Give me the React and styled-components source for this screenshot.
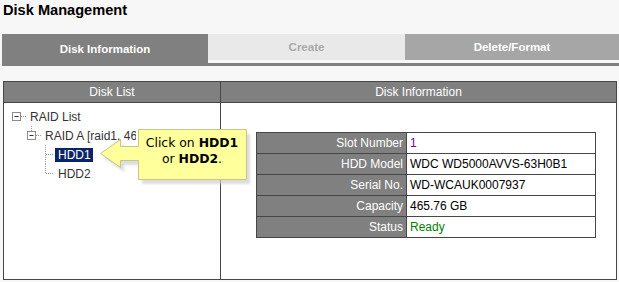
import React from 'react'
import styled, { createGlobalStyle } from 'styled-components'

const Global = createGlobalStyle`
  html, body {
    margin: 0;
    padding: 0;
    background: #f7f7f7;
  }
  body {
    width: 619px;
    height: 282px;
    overflow: hidden;
    font-family: "Liberation Sans", Arial, sans-serif;
  }
`

const Page = styled.div`
  padding: 2px 0 0 0;
`

const Title = styled.h1`
  margin: 0 0 0 3px;
  height: 32px;
  font-size: 14.6px;
  font-weight: bold;
  line-height: 17px;
  color: #000;
`

const Tabs = styled.div`
  display: flex;
  margin-left: 2px;
  height: 29px;
  border-bottom: 3px solid #808080;
  box-sizing: content-box;
`

const Tab = styled.div`
  width: ${(p) => p.w}px;
  flex: ${(p) => (p.w ? 'none' : '1')};
  height: 26px;
  display: flex;
  align-items: center;
  justify-content: center;
  font-size: 11.5px;
  font-weight: bold;
  color: ${(p) => p.fg};
  background: ${(p) => p.bg};
  ${(p) => p.active && 'height: 29px; margin-bottom: -3px; padding-bottom: 3px;'}
`

const Panel = styled.div`
  position: relative;
  margin: 15px 0 0 3px;
  width: 612px;
  height: 197px;
  border: 1px solid #474747;
  background: #fff;
  display: grid;
  grid-template-columns: 216px 1fr;
  grid-template-rows: 21px 1fr;
`

const HeadCell = styled.div`
  background: #808080;
  color: #fff;
  font-size: 12px;
  display: flex;
  align-items: center;
  justify-content: center;
  border-bottom: 1px solid #474747;
  ${(p) => p.divider && 'border-left: 1px solid #474747;'}
`

const TreeBody = styled.div`
  padding-top: 4px;
`

const InfoBody = styled.div`
  border-left: 1px solid #474747;
  padding: 29px 0 0 35px;
`

const TreeRow = styled.div`
  display: flex;
  align-items: center;
  height: 19px;
  font-size: 12px;
  color: #333;
  white-space: nowrap;
  svg {
    flex: none;
  }
`

const Clipped = styled.span`
  display: block;
  width: 91px;
  overflow: hidden;
`

const Selected = styled.span`
  background: #0a246a;
  color: #fff;
  padding: 0 2px 0 3px;
  line-height: 14px;
`

const InfoTable = styled.table`
  border-collapse: collapse;
  width: 340px;
  font-size: 12px;
  td {
    border: 1px solid #474747;
    height: 20px;
    padding: 0 3px;
  }
`

const Label = styled.td`
  background: #808080;
  color: #fff;
  text-align: right;
  width: 143px;
`

const Value = styled.td`
  color: ${(p) => p.color || '#000'};
  background: #fff;
`

const Callout = styled.div`
  position: absolute;
  left: 92px;
  top: 42px;
  width: 162px;
  height: 66px;
`

const CalloutText = styled.div`
  position: absolute;
  left: 42px;
  top: 11px;
  width: 108px;
  text-align: center;
  font-family: "DejaVu Sans", Verdana, sans-serif;
  font-size: 12.4px;
  line-height: 16px;
  color: #000;
  b {
    font-weight: bold;
  }
`

const dot = { stroke: '#999', strokeWidth: 1, strokeDasharray: '1 1' }

const Toggle = ({ x }) => (
  <>
    <rect x={x + 0.5} y={5.5} width={8} height={8} fill="#fff" stroke="#8c8c8c" />
    <line x1={x + 2.5} x2={x + 6.5} y1={9.5} y2={9.5} stroke="#333" />
  </>
)

const rows = [
  ['Slot Number', '1', '#800080'],
  ['HDD Model', 'WDC WD5000AVVS-63H0B1'],
  ['Serial No.', 'WD-WCAUK0007937'],
  ['Capacity', '465.76 GB'],
  ['Status', 'Ready', '#008000'],
]

export default function App() {
  return (
    <Page>
      <Global />
      <Title>Disk Management</Title>
      <Tabs>
        <Tab w={206} bg="#808080" fg="#fff" active>
          Disk Information
        </Tab>
        <Tab w={197} bg="#e9e9e9" fg="#a9a9a9">
          Create
        </Tab>
        <Tab bg="#a6a6a6" fg="#fff">
          Delete/Format
        </Tab>
      </Tabs>

      <Panel>
        <HeadCell>Disk List</HeadCell>
        <HeadCell divider>Disk Information</HeadCell>

        <TreeBody>
          <TreeRow>
            <svg width="26" height="19">
              <Toggle x={8} />
              <line x1={17} x2={22} y1={9.5} y2={9.5} style={dot} />
            </svg>
            RAID List
          </TreeRow>
          <TreeRow>
            <svg width="41" height="19">
              <line x1={27.5} x2={27.5} y1={0} y2={5} style={dot} />
              <Toggle x={23} />
              <line x1={32} x2={37} y1={9.5} y2={9.5} style={dot} />
            </svg>
            <Clipped>RAID A [raid1, 465.76 GB]</Clipped>
          </TreeRow>
          <TreeRow>
            <svg width="51" height="19">
              <line x1={41.5} x2={41.5} y1={0} y2={19} style={dot} />
              <line x1={42} x2={50} y1={9.5} y2={9.5} style={dot} />
            </svg>
            <Selected>HDD1</Selected>
          </TreeRow>
          <TreeRow>
            <svg width="54" height="19">
              <line x1={41.5} x2={41.5} y1={0} y2={9.5} style={dot} />
              <line x1={42} x2={50} y1={9.5} y2={9.5} style={dot} />
            </svg>
            HDD2
          </TreeRow>
        </TreeBody>

        <InfoBody>
          <InfoTable>
            <tbody>
              {rows.map(([k, v, c]) => (
                <tr key={k}>
                  <Label>{k}</Label>
                  <Value color={c}>{v}</Value>
                </tr>
              ))}
            </tbody>
          </InfoTable>
        </InfoBody>

        <Callout>
          <svg width="162" height="66">
            <defs>
              <filter id="sh" x="-10%" y="-10%" width="130%" height="130%">
                <feGaussianBlur stdDeviation="1.2" />
              </filter>
            </defs>
            <path
              d="M46 10 H154 V60 H46 V41 H28 V48 L8 34 L28 20 V27 H46 Z"
              fill="#cfcfcf"
              opacity="0.7"
              filter="url(#sh)"
            />
            <path
              d="M42.5 5.5 H150.5 V55.5 H42.5 V36.5 H24.5 V43.5 L4.5 29.5 L24.5 15.5 V22.5 H42.5 Z"
              fill="#ffff9c"
              stroke="#c6c68c"
            />
          </svg>
          <CalloutText>
            Click on <b>HDD1</b>
            <br />
            or <b>HDD2</b>.
          </CalloutText>
        </Callout>
      </Panel>
    </Page>
  )
}
